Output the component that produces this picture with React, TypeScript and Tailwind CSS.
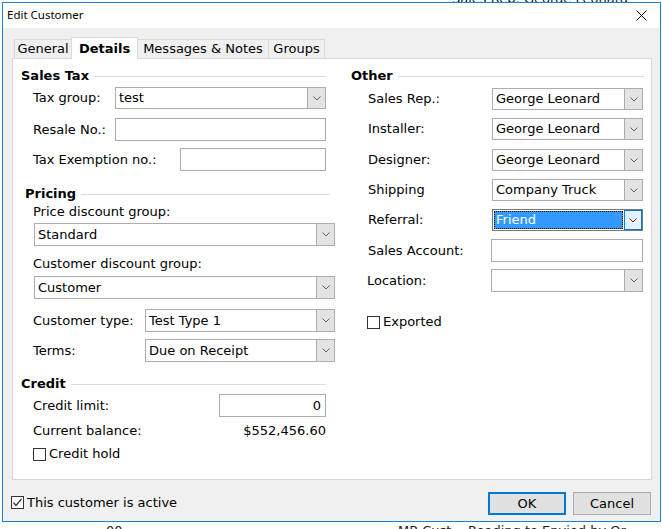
import React from "react";

const UI = { fontFamily: '"DejaVu Sans", Verdana, sans-serif' };
const TITLE = { fontFamily: '"Noto Sans", "Open Sans", sans-serif' };

function Chevron({ color = "#606060" }: { color?: string }) {
  return (
    <svg width="8" height="5" viewBox="0 0 8 5">
      <polyline points="0.5,0.5 4,4 7.5,0.5" fill="none" stroke={color} strokeWidth="1" />
    </svg>
  );
}

function Combo({ value, className }: { value?: string; className: string }) {
  return (
    <div className={`flex border border-[#acacac] bg-white ${className}`}>
      <div className="flex flex-1 items-center pl-[3px]">{value}</div>
      <div className="flex w-[18px] items-center justify-center border-l border-[#acacac] bg-[#e3e3e3]">
        <Chevron />
      </div>
    </div>
  );
}

function FocusCombo({ value, className }: { value: string; className: string }) {
  return (
    <div className={`flex border border-[#7a7a7a] bg-white ${className}`}>
      <div className="m-px flex flex-1 items-center border border-dotted border-black bg-[#3399ff] pl-px text-white">
        {value}
      </div>
      <div className="flex w-[18px] items-center justify-center border border-[#0078d7] bg-[#e5f1fb]">
        <Chevron color="#333" />
      </div>
    </div>
  );
}

function TextBox({ value, className }: { value?: string; className: string }) {
  return (
    <div className={`flex items-center justify-end border border-[#acacac] bg-white pr-[4px] ${className}`}>
      {value}
    </div>
  );
}

function CheckBox({ checked, label }: { checked?: boolean; label: string }) {
  return (
    <div className="flex h-[16px] items-center">
      <div className="flex h-[13px] w-[13px] items-center justify-center border border-[#333] bg-white">
        {checked && (
          <svg width="11" height="11" viewBox="0 0 11 11">
            <polyline points="1.5,5.5 4,8.5 9.5,2" fill="none" stroke="#333" strokeWidth="1.2" />
          </svg>
        )}
      </div>
      <span className="ml-[3px]">{label}</span>
    </div>
  );
}

function Heading({ text, className }: { text: string; className: string }) {
  return (
    <div className={`flex h-[16px] items-center ${className}`}>
      <span className="font-bold">{text}</span>
      <div className="ml-[5px] h-px flex-1 bg-[#dcdcdc]" />
    </div>
  );
}

function RightRow({ label, children, className }: { label: string; children: React.ReactNode; className: string }) {
  return (
    <div className={`flex items-center ${className}`}>
      <div className="w-[141px] pl-[17px]">{label}</div>
      {children}
    </div>
  );
}

export default function App() {
  return (
    <div className="relative h-[529px] w-[662px] overflow-hidden bg-white text-[13px] text-black" style={UI}>
      {/* desktop behind the dialog */}
      <div className="absolute left-[452px] top-[-11px] text-[13px] text-[#222]">Sales Rep: George Leonard</div>
      <div className="absolute left-[106px] top-[521px] text-[13px] text-[#222]">00</div>
      <div className="absolute left-[398px] top-[521px] text-[13px] text-[#222]">MB Cust... Reading to Envied by Or</div>

      <div className="relative ml-[2px] mt-[2px] flex h-[520px] w-[659px] flex-col border border-[#1883d7] bg-[#f0f0f0]">
        {/* title bar */}
        <div className="flex h-[25px] items-center justify-between bg-white pb-px pl-[4px] pr-[13px] text-[11.5px]" style={TITLE}>
          <span>Edit Customer</span>
          <svg width="11" height="11" viewBox="0 0 11 11">
            <path d="M0.5 0.5 L10.5 10.5 M10.5 0.5 L0.5 10.5" stroke="#000" strokeWidth="1" />
          </svg>
        </div>

        {/* tabs */}
        <div className="ml-[11px] mt-[9px] flex h-[21px] items-end">
          <div className="flex h-[19px] w-[58px] items-center justify-center border border-b-0 border-[#d9d9d9]">General</div>
          <div className="relative z-10 -ml-px mb-[-1px] flex h-[22px] w-[67px] items-center justify-center border border-b-0 border-[#d9d9d9] bg-white font-bold">
            Details
          </div>
          <div className="-ml-px flex h-[19px] w-[132px] items-center justify-center border border-b-0 border-[#d9d9d9]">
            Messages &amp; Notes
          </div>
          <div className="-ml-px flex h-[19px] w-[57px] items-center justify-center border border-b-0 border-[#d9d9d9]">Groups</div>
        </div>

        {/* tab panel */}
        <div className="ml-[9px] flex h-[422px] w-[640px] border border-[#d9d9d9] bg-white">
          {/* left column */}
          <div className="ml-[8px] flex w-[314px] flex-col">
            <Heading text="Sales Tax" className="mt-[9px] w-[305px]" />
            <div className="mt-[3px] flex items-center">
              <div className="w-[94px] pl-[12px]">Tax group:</div>
              <Combo value="test" className="h-[22px] w-[211px]" />
            </div>
            <div className="mt-[9px] flex items-center">
              <div className="w-[94px] pl-[12px]">Resale No.:</div>
              <TextBox className="h-[23px] w-[211px]" />
            </div>
            <div className="mt-[7px] flex items-center">
              <div className="w-[159px] pl-[12px]">Tax Exemption no.:</div>
              <TextBox className="h-[23px] w-[146px]" />
            </div>

            <Heading text="Pricing" className="ml-[4px] mt-[15px] w-[305px]" />
            <div className="mt-[2px] h-[16px] pl-[12px] leading-[16px]">Price discount group:</div>
            <Combo value="Standard" className="ml-[13px] mt-[3px] h-[23px] w-[301px]" />
            <div className="mt-[10px] h-[16px] pl-[12px] leading-[16px]">Customer discount group:</div>
            <Combo value="Customer" className="ml-[13px] mt-[4px] h-[23px] w-[301px]" />
            <div className="mt-[10px] flex items-center">
              <div className="w-[124px] pl-[12px]">Customer type:</div>
              <Combo value="Test Type 1" className="h-[23px] w-[190px]" />
            </div>
            <div className="mt-[7px] flex items-center">
              <div className="w-[124px] pl-[12px]">Terms:</div>
              <Combo value="Due on Receipt" className="h-[23px] w-[190px]" />
            </div>

            <Heading text="Credit" className="mt-[14px] w-[305px]" />
            <div className="mt-[2px] flex items-center">
              <div className="w-[198px] pl-[12px]">Credit limit:</div>
              <TextBox value="0" className="h-[23px] w-[107px]" />
            </div>
            <div className="mt-[6px] flex h-[16px] w-[305px] items-center justify-between pl-[12px]">
              <span>Current balance:</span>
              <span>$552,456.60</span>
            </div>
            <div className="mt-[7px] pl-[12px]">
              <CheckBox label="Credit hold" />
            </div>
          </div>

          {/* right column */}
          <div className="ml-[16px] flex w-[293px] flex-col">
            <Heading text="Other" className="mt-[9px] w-[293px]" />
            <RightRow label="Sales Rep.:" className="mt-[4px]">
              <Combo value="George Leonard" className="h-[22px] w-[151px]" />
            </RightRow>
            <RightRow label="Installer:" className="mt-[8px]">
              <Combo value="George Leonard" className="h-[22px] w-[151px]" />
            </RightRow>
            <RightRow label="Designer:" className="mt-[9px]">
              <Combo value="George Leonard" className="h-[22px] w-[151px]" />
            </RightRow>
            <RightRow label="Shipping" className="mt-[8px]">
              <Combo value="Company Truck" className="h-[22px] w-[151px]" />
            </RightRow>
            <RightRow label="Referral:" className="mt-[8px]">
              <FocusCombo value="Friend" className="h-[22px] w-[151px]" />
            </RightRow>
            <div className="mt-[8px] flex items-center">
              <div className="w-[140px] pl-[17px]">Sales Account:</div>
              <TextBox className="h-[23px] w-[152px]" />
            </div>
            <div className="mt-[7px] flex items-center">
              <div className="w-[140px] pl-[16px]">Location:</div>
              <Combo className="h-[23px] w-[152px]" />
            </div>
            <div className="mt-[22px] pl-[16px]">
              <CheckBox label="Exported" />
            </div>
          </div>
        </div>

        {/* footer */}
        <div className="flex items-center pl-[8px] pr-[9px] pt-[12px]">
          <div className="-mt-[2px]">
            <CheckBox checked label="This customer is active" />
          </div>
          <div className="ml-auto flex gap-[7px]">
            <button className="h-[23px] w-[78px] border-2 border-[#0078d7] bg-[#e1e1e1]">OK</button>
            <button className="h-[23px] w-[78px] border border-[#adadad] bg-[#e1e1e1]">Cancel</button>
          </div>
        </div>
      </div>
    </div>
  );
}
